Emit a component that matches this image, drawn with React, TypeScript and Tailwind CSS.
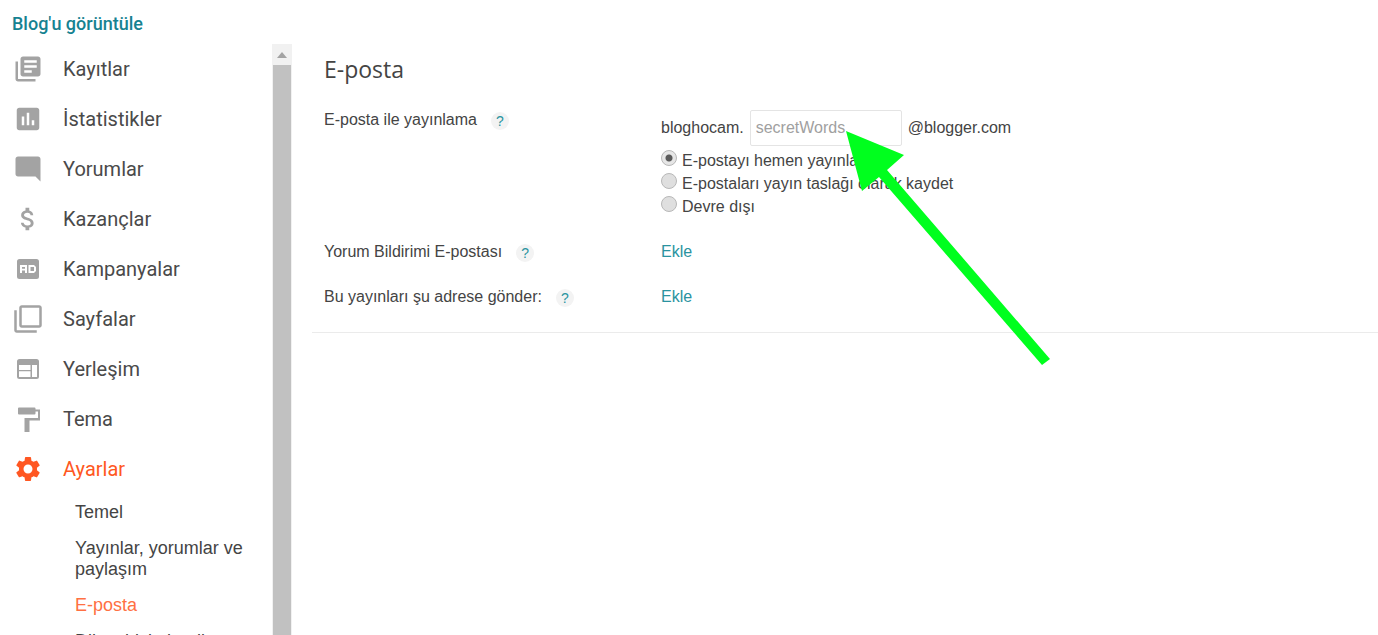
import { useState } from "react";
import type { ReactNode } from "react";
import {
  MdAssessment,
  MdAttachMoney,
  MdFilterNone,
  MdLibraryBooks,
  MdModeComment,
  MdSettings,
} from "react-icons/md";

const AdIcon = () => (
  <svg viewBox="0 0 30 30" className="w-[30px] h-[30px]" fill="currentColor" fillRule="evenodd">
    <path d="M6.500 5h17A2.500 2.500 0 0 1 26 7.500v15a2.500 2.500 0 0 1-2.500 2.500h-17A2.500 2.500 0 0 1 4 22.500v-15A2.500 2.500 0 0 1 6.500 5zM7 11v8h2v-2.500h3V19h2v-8zM9 13h3v1.700H9zM15.500 11v8h5.500l2-2v-4l-2-2zM17.500 13H21v4h-3.500z" />
  </svg>
);

const LayoutIcon = () => (
  <svg viewBox="0 0 30 30" className="w-[30px] h-[30px]" fill="currentColor" fillRule="evenodd">
    <path d="M6.500 5h17A2.500 2.500 0 0 1 26 7.500v15a2.500 2.500 0 0 1-2.500 2.500h-17A2.500 2.500 0 0 1 4 22.500v-15A2.500 2.500 0 0 1 6.500 5zM6 11v5h11.500v-5zM6 17.200v5.800h11.500v-5.800zM19 11v12h5V11z" />
  </svg>
);

const RollerIcon = () => (
  <svg viewBox="0 0 30 30" className="w-[30px] h-[30px]" fill="currentColor">
    <path d="M6 3.500h15.500a1 1 0 0 1 1 1V5.500H27v11H16.500V28h-5V14H25V7.500h-2.500v2a1 1 0 0 1-1 1H6a1 1 0 0 1-1-1v-5a1 1 0 0 1 1-1z" />
  </svg>
);

const navItems = [
  { icon: <MdLibraryBooks className="w-[30px] h-[30px]" />, label: "Kayıtlar" },
  { icon: <MdAssessment className="w-[30px] h-[30px]" />, label: "İstatistikler" },
  { icon: <MdModeComment className="w-[30px] h-[30px]" />, label: "Yorumlar" },
  { icon: <MdAttachMoney className="w-[30px] h-[30px]" />, label: "Kazançlar" },
  { icon: <AdIcon />, label: "Kampanyalar" },
  { icon: <MdFilterNone className="w-[30px] h-[30px]" />, label: "Sayfalar" },
  { icon: <LayoutIcon />, label: "Yerleşim" },
  { icon: <RollerIcon />, label: "Tema" },
  { icon: <MdSettings className="w-[30px] h-[30px]" />, label: "Ayarlar", active: true },
];

const settingsItems = [
  { label: "Temel" },
  { label: "Yayınlar, yorumlar ve paylaşım" },
  { label: "E-posta", active: true },
  { label: "Dil ve biçimlendirme" },
];

const publishOptions = [
  "E-postayı hemen yayınla",
  "E-postaları yayın taslağı olarak kaydet",
  "Devre dışı",
];

function Sidebar() {
  return (
    <div className="w-73 shrink-0 flex overflow-hidden">
      <nav className="flex-1 min-w-0">
        <ul className="font-[Roboto,sans-serif] text-[20px]">
          {navItems.map((item) => (
            <li key={item.label}>
              <a
                href="#"
                className={`flex items-center h-[50px] ${item.active ? "text-[#ff5722]" : "text-[#4a4a4a]"}`}
              >
                <span
                  className={`w-[55px] shrink-0 flex justify-center ${item.active ? "" : "text-[#a3a3a3]"}`}
                >
                  {item.icon}
                </span>
                <span className="pl-2">{item.label}</span>
              </a>
            </li>
          ))}
        </ul>
        <ul className="pl-[75px] pr-6 pt-2 flex flex-col gap-[15px] text-[18px] leading-[21px]">
          {settingsItems.map((item) => (
            <li key={item.label}>
              <a href="#" className={item.active ? "text-[#ff7043]" : "text-[#444444]"}>
                {item.label}
              </a>
            </li>
          ))}
        </ul>
      </nav>

      {/* Scrollbar */}
      <div className="w-5 flex flex-col bg-[#f1f1f1]">
        <button aria-label="Yukarı kaydır" className="h-[21px] flex items-center justify-center">
          <svg viewBox="0 0 10 6" className="w-[10px] h-[6px]" fill="#a3a3a3">
            <path d="M5 0l5 6H0z" />
          </svg>
        </button>
        <div className="flex-1 mx-px bg-[#c1c1c1]" />
      </div>
    </div>
  );
}

function Help() {
  return (
    <button
      aria-label="Yardım"
      className="ml-3.5 mt-0.5 w-[18px] h-[18px] rounded-full bg-[#f3f3f3] text-[#2a93a0] text-[14px] leading-4 text-center"
    >
      ?
    </button>
  );
}

function Row({ label, children }: { label: string; children: ReactNode }) {
  return (
    <div className="flex">
      <div className="w-[337px] shrink-0 flex items-center h-5">
        <span>{label}</span>
        <Help />
      </div>
      <div>{children}</div>
    </div>
  );
}

export default function App() {
  const [option, setOption] = useState(publishOptions[0]);

  return (
    <div className="h-screen flex flex-col overflow-hidden bg-white font-['Liberation_Sans',Arial,sans-serif] text-[#444444]">
      <header className="h-11 shrink-0 pl-3 pt-3">
        <a href="#" className="font-[Roboto,sans-serif] font-medium text-[18px] leading-[23px] text-[#168291]">
          Blog'u görüntüle
        </a>
      </header>

      <div className="flex-1 min-h-0 flex">
        <Sidebar />

        <main className="relative flex-1 min-w-0 pl-5">
          <section className="pl-3 pb-[25px] border-b border-[#ebebeb] text-[16px] leading-5">
            <h1 className="pt-[7px] font-['Open_Sans',sans-serif] text-[23px] leading-9">E-posta</h1>

            <div className="pt-[23px] flex flex-col gap-[25px]">
              <Row label="E-posta ile yayınlama">
                <div className="flex items-center">
                  <label htmlFor="secret">bloghocam.</label>
                  <input
                    id="secret"
                    type="text"
                    placeholder="secretWords"
                    className="w-[152px] h-9 mx-1.5 px-[5px] border border-[#e4e4e4] rounded-xs placeholder:text-[#a0a0a0]"
                  />
                  <span>@blogger.com</span>
                </div>
                <div className="pt-0.5">
                  {publishOptions.map((name) => (
                    <label key={name} className="flex items-start h-[23px]">
                      <input
                        type="radio"
                        name="publish"
                        checked={option === name}
                        onChange={() => setOption(name)}
                        className="appearance-none w-4 h-4 mt-0.5 mr-[5px] rounded-full border border-[#b8b8b8] bg-[#dfdfdf] checked:bg-[radial-gradient(circle,#5a5a5a_0_3px,#e6e6e6_4px)]"
                      />
                      <span className="pt-[3px]">{name}</span>
                    </label>
                  ))}
                </div>
              </Row>
              <Row label="Yorum Bildirimi E-postası">
                <a href="#" className="text-[#2a93a0]">Ekle</a>
              </Row>
              <Row label="Bu yayınları şu adrese gönder:">
                <a href="#" className="text-[#2a93a0]">Ekle</a>
              </Row>
            </div>
          </section>

          {/* Arrow pointing at the secret words field */}
          <svg
            viewBox="0 0 204 234"
            className="absolute left-[554px] top-[87px] w-[204px] h-[234px] pointer-events-none"
            fill="#00ff1e"
          >
            <path d="M0 0L58 24L41 39L204 228L196 234L33 46L16 60z" />
          </svg>
        </main>
      </div>
    </div>
  );
}
